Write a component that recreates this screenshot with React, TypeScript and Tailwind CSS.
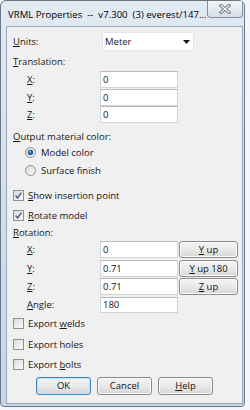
import React from "react";

const U = ({ children }: { children: React.ReactNode }) => (
  <span className="underline underline-offset-[1px] decoration-[0.8px]">{children}</span>
);

function Radio({ checked }: { checked?: boolean }) {
  return (
    <svg width="11" height="11" viewBox="0 0 11 11" className="shrink-0">
      <defs>
        <linearGradient id={checked ? "rg1" : "rg0"} x1="0" y1="0" x2="1" y2="1">
          <stop offset="0" stopColor="#d8d8d8" />
          <stop offset="1" stopColor="#fbfbfb" />
        </linearGradient>
      </defs>
      <circle cx="5.5" cy="5.5" r="5" fill={`url(#${checked ? "rg1" : "rg0"})`} stroke="#8c8e90" />
      {checked && <circle cx="5.5" cy="5.5" r="2.8" fill="#2b6496" />}
      {checked && <circle cx="4.8" cy="4.7" r="1" fill="#7fb2dc" />}
    </svg>
  );
}

function Check({ checked }: { checked?: boolean }) {
  return (
    <span className="w-[11px] h-[11px] shrink-0 border border-[#8e8f8f] bg-gradient-to-br from-[#dcdcdc] to-[#fbfbfb] flex items-center justify-center">
      {checked && (
        <svg width="9" height="9" viewBox="0 0 9 9">
          <path d="M1.6 4.6 L3.6 7 L7.4 1.6" fill="none" stroke="#4a5d8c" strokeWidth="1.5" />
        </svg>
      )}
    </span>
  );
}

function Field({ value, w = "w-[78px]", h = "h-[17px]" }: { value: string; w?: string; h?: string }) {
  return (
    <div className={`${w} ${h} bg-white border border-[#cfd4da] border-t-[#b4bac2] flex items-center pl-[2px]`}>
      {value}
    </div>
  );
}

function Btn({ children, primary }: { children: React.ReactNode; primary?: boolean }) {
  return (
    <div
      className={`h-full flex items-center justify-center rounded-[3px] border ${
        primary ? "border-[#3d85c0] shadow-[inset_0_0_0_1px_#bde3f7]" : "border-[#8a8a8a] shadow-[inset_0_0_0_1px_#fbfbfb]"
      } bg-gradient-to-b from-[#f4f4f4] via-[#e9e9e9] to-[#d6d6d6]`}
    >
      {children}
    </div>
  );
}

function CheckRow({ label, checked, mt }: { label: React.ReactNode; checked?: boolean; mt: string }) {
  return (
    <div className={`${mt} h-[15px] pl-[6px] flex items-center gap-[4px]`}>
      <Check checked={checked} />
      <span>{label}</span>
    </div>
  );
}

function CoordRow({ label, value, mt, h = "h-[17px]", btn }: { label: React.ReactNode; value: string; mt: string; h?: string; btn?: React.ReactNode }) {
  return (
    <div className={`${mt} ${h} flex items-center`}>
      <div className="w-[93px] pl-[20px]">{label}</div>
      <Field value={value} h={h} />
      {btn && (
        <div className="ml-[1px] w-[59px] h-full">
          <Btn>{btn}</Btn>
        </div>
      )}
    </div>
  );
}

export default function App() {
  return (
    <div className="w-[250px] h-[410px] bg-[#f4f6f9] overflow-hidden font-['Open_Sans','Noto_Sans',sans-serif] text-[9.5px] text-[#151515] leading-none">
      <div className="w-[245px] h-[407px] rounded-t-[6px] rounded-b-[4px] border border-[#6a7888] bg-gradient-to-b from-[#e2eaf3] via-[#d3dfeb] to-[#c8d6e5] flex flex-col">
        <div className="h-[25px] flex items-start shrink-0">
          <div className="pl-[7px] pt-[9px] whitespace-pre text-[9.6px] text-black">
            VRML Properties  --  v7.300  (3) everest/147...
          </div>
          <div className="ml-auto mr-[1px] w-[37px] h-[17px] rounded-b-[4px] border border-t-0 border-[#8391a2] bg-gradient-to-b from-[#f3f6f9] to-[#d5dee8] flex items-center justify-center">
            <svg width="12" height="10" viewBox="0 0 12 10">
              <path d="M2 1.5 L10 8.5 M10 1.5 L2 8.5" stroke="#7b8089" strokeWidth="3.2" strokeLinecap="square" />
              <path d="M2 1.5 L10 8.5 M10 1.5 L2 8.5" stroke="#f6f6f6" strokeWidth="1.2" strokeLinecap="square" />
            </svg>
          </div>
        </div>
        <div className="ml-[5px] mr-[1px] mb-[2px] flex-1 border border-[#98a8bb] bg-[#f0f0f0] flex flex-col">
          <div className="mt-[5px] h-[19px] flex items-center">
            <div className="w-[95px] pl-[6px]">
              <U>U</U>nits:
            </div>
            <div className="w-[92px] h-full bg-white border border-[#e2e5e9] flex items-center pl-[2px] pr-[3px]">
              <span>Meter</span>
              <svg width="7" height="4" viewBox="0 0 7 4" className="ml-auto">
                <path d="M0 0 H7 L3.5 4 Z" fill="#111" />
              </svg>
            </div>
          </div>

          <div className="mt-[3px] h-[16px] pl-[6px] flex items-center">
            <U>T</U>ranslation:
          </div>
          <CoordRow mt="mt-[1px]" label={<><U>X</U>:</>} value="0" />
          <CoordRow mt="mt-[1px]" label={<><U>Y</U>:</>} value="0" />
          <CoordRow mt="mt-[0px]" label={<><U>Z</U>:</>} value="0" />

          <div className="mt-[6px] h-[16px] pl-[6px] flex items-center">
            <U>O</U>utput material color:
          </div>
          <div className="h-[15px] pl-[18px] flex items-center gap-[5px]">
            <Radio checked />
            <span>Model color</span>
          </div>
          <div className="mt-[3px] h-[15px] pl-[18px] flex items-center gap-[5px]">
            <Radio />
            <span>Surface finish</span>
          </div>

          <CheckRow mt="mt-[10px]" checked label={<><U>S</U>how insertion point</>} />
          <CheckRow mt="mt-[5px]" checked label={<><U>R</U>otate model</>} />

          <div className="mt-[2px] h-[16px] pl-[6px] flex items-center">
            <U>R</U>otation:
          </div>
          <CoordRow mt="mt-[0px]" label={<><U>X</U>:</>} value="0" btn={<><U>Y</U>&nbsp;up</>} />
          <CoordRow mt="mt-[2px]" label={<><U>Y</U>:</>} value="0.71" btn={<><U>Y</U>&nbsp;up 180</>} />
          <CoordRow mt="mt-[1px]" label={<><U>Z</U>:</>} value="0.71" btn={<><U>Z</U>&nbsp;up</>} />
          <CoordRow mt="mt-[2px]" h="h-[16px]" label={<><U>A</U>ngle:</>} value="180" />

          <CheckRow mt="mt-[3px]" label={<>Export <U>w</U>elds</>} />
          <CheckRow mt="mt-[6px]" label={<>Export holes</>} />
          <CheckRow mt="mt-[5px]" label={<>Export <U>b</U>olts</>} />

          <div className="mt-[5px] h-[18px] pl-[29px] flex gap-[6px]">
            <div className="w-[55px] h-full">
              <Btn primary>OK</Btn>
            </div>
            <div className="w-[55px] h-full">
              <Btn>Cancel</Btn>
            </div>
            <div className="w-[55px] h-full">
              <Btn>
                <U>H</U>elp
              </Btn>
            </div>
          </div>
        </div>
      </div>
    </div>
  );
}
